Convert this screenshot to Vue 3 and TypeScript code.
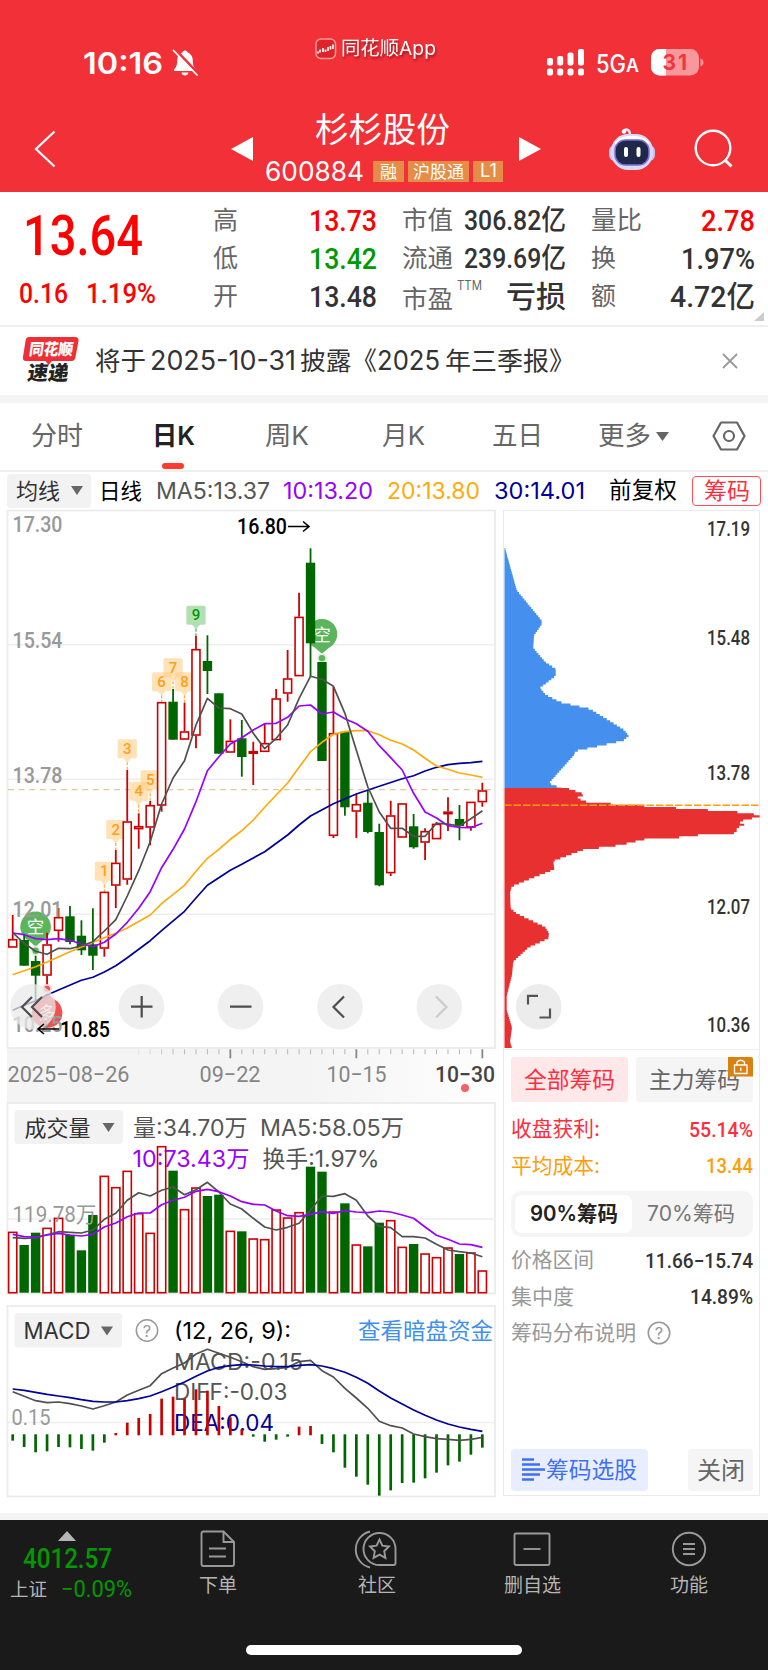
<script setup lang="ts">
import { h, type FunctionalComponent } from 'vue'

interface FitProps { t: string; w: number; s: number }

// One line of text set to a fixed measure.
const Fit: FunctionalComponent<FitProps> = (p) =>
  h('svg', { width: p.w, height: p.s }, [
    h('text', {
      x: 0, y: p.s * 0.86, 'font-size': p.s, textLength: p.w,
      lengthAdjust: 'spacingAndGlyphs', fill: 'currentColor',
    }, p.t),
  ])
Fit.props = ['t', 'w', 's']

const px = (i: number): number => 12.7 + 11.455 * i

// up, high, body top, body bottom, low
type Candle = [number, number, number, number, number]
const candles: Candle[] = [
  [1, 915, 939, 947.7, 947.7], [0, 935, 940, 965.7, 965.7], [0, 955.7, 961, 975.7, 1002], [1, 932.7, 944.3, 975.7, 984.3],
  [1, 908, 917, 931, 941.7], [0, 906, 916.3, 942, 944.3], [0, 920.3, 935.7, 950.3, 955], [0, 908.3, 944.3, 955.7, 970],
  [1, 891.7, 891.7, 948.7, 956.7], [1, 850, 862.7, 885.7, 908], [1, 770, 821.3, 879.7, 884.7], [1, 813.3, 826, 829.3, 848.7],
  [1, 801, 805, 827.7, 845.3], [1, 702, 702, 805.7, 811.7], [0, 689, 701.7, 739.7, 739.7], [1, 702.7, 731.3, 739.7, 739.7],
  [1, 636, 649, 735.7, 748.3], [0, 635.3, 661, 671, 694], [0, 693.3, 693.3, 753.7, 753.7], [1, 719.3, 740.7, 752.7, 752.7],
  [0, 720, 738.3, 757, 776.7], [1, 741.7, 751, 753.7, 785], [1, 723.7, 743, 752, 752], [1, 689, 698.3, 740.3, 740.3],
  [1, 650, 678.3, 693.7, 701.7], [1, 592.7, 616.7, 676.3, 676.3], [0, 548.3, 562.7, 643.3, 676.7], [0, 662, 662, 761, 761],
  [1, 686.7, 733, 836, 838], [0, 731.7, 731.7, 807.3, 815.7], [1, 794, 804, 811.7, 838], [0, 790, 802.7, 832, 833.3],
  [0, 823.7, 832, 885.3, 886.3], [1, 800.7, 815.3, 873.3, 876], [1, 803.3, 803.3, 837.7, 837.7], [0, 814, 826.3, 847.3, 848.7],
  [1, 828.3, 831, 842.7, 860], [1, 822, 823.7, 839.3, 839.3], [1, 797.3, 811.5, 814, 831], [0, 805, 819, 826, 840.3],
  [1, 801.7, 801.7, 827.7, 830.7], [1, 782.7, 790.3, 802.3, 806.7],
]

const line = (ys: number[], base = 0, k = 1): string =>
  ys.map((y, i) => `${px(i).toFixed(1)},${(base + y * k).toFixed(1)}`).join(' ')
const sparse = (ps: [number, number][]): string => ps.map(([i, y]) => `${px(i).toFixed(1)},${y}`).join(' ')

const ma5 = line([932.7, 943.3, 951.3, 954.3, 948.3, 948.7, 945.7, 941.7, 931, 919.7, 896, 870.7, 841.7, 804, 778, 760.7, 725, 698.3, 708, 708.7, 714, 733.3, 748.7, 738.3, 725, 698.3, 676.3, 679.3, 686.3, 713.3, 750, 787, 812, 828.3, 828.3, 836.3, 836.3, 823.3, 824, 826, 818.7, 810.7])
const ma10 = line([933, 934.7, 938.7, 939.7, 938.7, 940.3, 944, 946.7, 942.3, 934, 922.3, 908.3, 891.7, 867.7, 849.3, 829, 801.7, 770.7, 756.7, 744, 737.7, 730, 723.7, 723.3, 717.3, 706, 705, 714, 712, 718.7, 723.7, 731.3, 745.7, 757.7, 770, 793.3, 812, 818, 825.7, 827.3, 827.7, 823.3])
const ma20 = sparse([[0, 974.7], [2, 966.7], [3, 962], [5, 951.7], [7, 942.3], [9, 933.3], [10, 928], [12, 915], [13, 903.7], [15, 885.3], [16, 871.3], [17, 858.3], [18, 849.3], [19, 839.3], [20, 830.7], [21, 820], [22, 807.3], [23, 795], [24, 783], [25, 767.3], [26, 751.7], [27, 742.3], [28, 734.3], [29, 731.7], [30, 730.7], [31, 730.7], [32, 734.7], [33, 740.3], [34, 744], [35, 750], [36, 758.3], [37, 766], [38, 769.3], [39, 773], [40, 775], [41, 777.3]])
const ma30 = sparse([[0, 1010.3], [1, 1005.3], [2, 1000.7], [3, 995], [4, 990], [6, 980.3], [7, 977.3], [8, 972], [9, 965.7], [10, 957.7], [12, 940.7], [13, 930.7], [15, 911.3], [16, 898], [17, 885.3], [19, 870.3], [20, 864.3], [22, 851.7], [24, 835], [25, 825], [26, 816], [28, 803.7], [30, 794], [32, 786.3], [34, 778.7], [35, 775.7], [36, 771], [37, 767.3], [38, 764.7], [39, 763.3], [40, 762.7], [41, 761.3]])

const flags: [number, number, number][] = [
  [1, 8, 861.7], [2, 9, 820], [3, 10, 739.3], [4, 11, 781.7], [5, 12, 770.3], [6, 13, 672.3], [7, 14, 658.3], [8, 15, 672.3], [9, 16, 605.7],
]

const scaleMarks: [string, number][] = [['17.30', 532.3], ['15.54', 648], ['13.78', 782.7], ['12.01', 917], ['10.25', 1032.3]]
const ticks: number[] = Array.from({ length: 31 }, (_, k) => k + 11)
const majors = [19, 30, 41]

// bar tops; a minus sign marks a falling day
const volumes = [410, -450, -413, 398, 368, -420, -466, -360, 242, 276, 227, 354, 413, 153, -227, 342, 277, -303, -299, 407, -409, 430, 432, 343, 367, 351, -215, -230, 349, -325, 448, -454, -383, 375, 455, -447, 475, 486, 457, -477, 472, 526]
  .map((v) => ({ up: v > 0, y: 1095 + Math.abs(v) / 3 }))
const vol5 = line([428, 430, 429, 419, 410, 412, 414, 405, 373, 355, 316, 293, 303, 286, 276, 299, 284, 262, 291, 327, 342, 370, 396, 405, 397, 385, 345, 303, 304, 296, 316, 363, 394, 398, 425, 425, 429, 448, 465, 470, 474, 485], 1095, 1 / 3)
const vol10 = line([418, 425, 426, 420, 415, 420, 423, 418, 396, 384, 365, 354, 354, 329, 316, 307, 289, 283, 290, 303, 320, 328, 330, 348, 362, 364, 358, 350, 355, 347, 351, 353, 348, 351, 360, 370, 396, 421, 433, 447, 449, 457], 1095, 1 / 3)

const macdBars = [422, 441, 457, 454, 441, 442, 447, 452, 428, 399, 368, 354, 342, 296, 290, 297, 268, 272, 318, 352, 388, 410, 425, 419, 410, 380, 378, 432, 457, 503, 530, 554, 587, 571, 549, 548, 535, 518, 496, 485, 464, 443]
const diff = line([275, 289, 302, 308, 306, 311, 318, 327, 317, 306, 285, 271, 257, 221, 204, 189, 162, 148, 160, 172, 185, 200, 208, 206, 202, 185, 181, 212, 231, 265, 294, 325, 364, 377, 384, 402, 410, 416, 418, 421, 418, 412], 1300, 1 / 3)
const dea = line([267, 271, 277, 283, 288, 293, 299, 304, 306, 306, 302, 296, 288, 275, 261, 246, 229, 213, 202, 197, 194, 195, 198, 200, 200, 196, 194, 198, 206, 217, 232, 250, 273, 294, 312, 330, 346, 360, 372, 381, 388, 394], 1300, 1 / 3)

type Pt = [number, number]
const lossPts: Pt[] = [[505, 548], [516.7, 590.2], [541.7, 620.7], [541.7, 624.3], [534, 635.5], [533.3, 648], [545, 661.8], [555.7, 669], [555.7, 675.8], [540, 688], [546, 695], [560, 702], [590, 709], [615, 724.2], [624.3, 730.2], [628.7, 735.8], [623.3, 740.7], [575.3, 751.2], [574, 755], [549.3, 782.8], [552.7, 785.3], [562.7, 788]]
const gainPts: Pt[] = [[566, 788], [585, 794.4], [577.7, 797.5], [583.3, 801.4], [606.7, 803.5], [646.7, 806], [676.7, 808], [703, 809.8], [730, 811.2], [755, 814.4], [760, 816.5], [738.3, 821.7], [744.7, 825], [736.7, 827.7], [736.7, 833], [700, 835], [681.7, 837.2], [645, 839.3], [620, 845.2], [583.3, 849.8], [553.3, 861], [554.3, 869.4], [528.3, 879.6], [511.7, 886.6], [510, 892.6], [510.7, 908.4], [516.7, 913.6], [545, 927], [549, 933], [548.3, 938.5], [528.3, 947.6], [513.3, 961.7], [512, 975], [506.7, 996], [506.7, 1010], [512, 1027.6], [510, 1041.6], [512, 1048]]
function stepped(ps: Pt[]): string {
  const y0 = ps[0][1]
  const y1 = ps[ps.length - 1][1]
  let d = `M504.5 ${y0}`
  for (let y = y0; y < y1; y += 2.1) {
    const end = Math.min(y + 2.1, y1)
    const m = (y + end) / 2
    const k = Math.max(1, ps.findIndex((q) => q[1] > m))
    const [xa, ya] = ps[k - 1]
    const [xb, yb] = ps[k]
    const x = xa + ((xb - xa) * (m - ya)) / (yb - ya || 1)
    d += `H${x.toFixed(1)}V${end.toFixed(1)}`
  }
  return d + 'H504.5Z'
}
const lossPath = stepped(lossPts)
const gainPath = stepped(gainPts)
const chipMarks: [string, number][] = [['17.19', 535.5], ['15.48', 645], ['13.78', 779.6], ['12.07', 914], ['10.36', 1031.5]]
</script>

<template>
  <div class="app">
    <header class="top">
      <div class="status">
        <Fit class="ui w6 time" t="10:16" :w="80" :s="30" />
        <svg class="bell" width="28" height="28" viewBox="0 0 28 28">
          <path d="M14 1.500c1.600 0 2.400 1 2.500 2 3.800 1.200 5.300 4.500 5.300 8.500 0 5 1.500 6.500 3 8.300.6.9.2 1.700-.8 1.700H4c-1 0-1.400-.8-.8-1.700 1.500-1.800 3-3.300 3-8.300 0-4 1.500-7.300 5.300-8.500.1-1 .9-2 2.500-2zM10.500 23.500h7c-.4 1.800-1.700 3-3.500 3s-3.100-1.200-3.500-3z" fill="#fff" />
          <path d="M4.200 0.500 27.500 25" stroke="#f23038" stroke-width="2.600" />
          <path d="M2.500 1.500 26 26" stroke="#fff" stroke-width="1.800" stroke-linecap="round" />
        </svg>
        <div class="brand">
          <svg width="22" height="22" viewBox="0 0 22 22">
            <rect x="1" y="1" width="19.500" height="19.500" rx="5" fill="#e0222b" stroke="#f79a9e" stroke-width="1.500" />
            <path d="M3 15.500v-2m2 1v-3m3 2.500v-4m2.500 4v-2.500m2.500 1.500v-4m2.500 2.500v-3.500m2.500 3v-4.500" fill="none" stroke="#fff" stroke-width="1.700" />
          </svg>
          <Fit class="ui shadow" t="同花顺App" :w="95" :s="18.8" />
        </div>
        <svg class="signal" width="38" height="27" viewBox="0 0 38 27" fill="#fff">
          <rect x="0" y="9" width="6" height="7.500" rx="2" /><rect x="10.200" y="7" width="6" height="9.500" rx="2" /><rect x="20.500" y="3.500" width="6" height="13" rx="2" /><rect x="31" y="0" width="6" height="16.500" rx="2" />
          <rect x="0" y="19.500" width="6" height="7" rx="2" /><rect x="10.200" y="19.500" width="6" height="7" rx="2" /><rect x="20.500" y="19.500" width="6" height="7" rx="2" /><rect x="31" y="19.500" width="6" height="7" rx="2" />
        </svg>
        <Fit class="ui w5 g5" t="5G" :w="30" :s="25.5" />
        <Fit class="ui w6 ga" t="A" :w="13" :s="18" />
        <svg class="battery" width="53" height="27" viewBox="0 0 53 27">
          <defs><clipPath id="bat"><rect width="48" height="26.500" rx="8.500" /></clipPath></defs>
          <g clip-path="url(#bat)"><rect width="48" height="27" fill="#f9989c" /><rect width="15" height="27" fill="#fff" /></g>
          <path d="M49.500 9.500c2 .8 3 2.200 3 4s-1 3.200-3 4z" fill="#f9989c" />
          <text x="11.500" y="20.700" font-size="21" textLength="24.500" class="ui w7" fill="#ee3741">31</text>
        </svg>
      </div>
      <div class="titlebar">
        <svg class="back" width="22" height="38" viewBox="0 0 22 38"><path d="M20.500 1.500 2 19l18.500 17.500" fill="none" stroke="#fff" stroke-width="2.200" /></svg>
        <svg class="prev" width="22" height="24" viewBox="0 0 22 24"><path d="M22 0v24L0 12z" fill="#fff" /></svg>
        <div class="stock">
          <Fit class="ui" t="杉杉股份" :w="135" :s="34" />
          <div class="coderow">
            <Fit class="ui" t="600884" :w="99" :s="26.5" />
            <span class="tag t1"><Fit class="ui" t="融" :w="17" :s="17" /></span>
            <span class="tag t3"><Fit class="ui" t="沪股通" :w="51" :s="17" /></span>
            <span class="tag t2"><Fit class="ui" t="L1" :w="17" :s="18" /></span>
          </div>
        </div>
        <svg class="next" width="22" height="24" viewBox="0 0 22 24"><path d="M0 0v24l22-12z" fill="#fff" /></svg>
        <svg class="robot" width="48" height="44" viewBox="0 0 48 44">
          <path d="M15 5c2-4 7-3 7 3" fill="none" stroke="#e7e9fb" stroke-width="2.400" stroke-linecap="round" /><circle cx="16" cy="4.500" r="2.200" fill="#fff" />
          <rect x="1" y="18" width="46" height="16" rx="6" fill="#c3c7ee" />
          <rect x="3" y="7" width="42" height="36" rx="17" fill="#d6daf5" />
          <path d="M8 17C12 8 36 8 40 17" fill="none" stroke="#fff" stroke-width="3" />
          <rect x="7" y="13" width="34" height="25" rx="10.500" fill="#1f2849" stroke="#7d6de0" stroke-width="1.500" />
          <rect x="16" y="20" width="4" height="10" rx="2" fill="#fff" /><rect x="28.500" y="20" width="4" height="10" rx="2" fill="#fff" />
        </svg>
        <svg class="search" width="40" height="40" viewBox="0 0 40 40" fill="none" stroke="#fff" stroke-width="2.400"><circle cx="19" cy="19" r="17.300" /><path d="m31 31 6.500 6.500" stroke-width="3" /></svg>
      </div>
    </header>

    <section class="quote">
      <div class="last">
        <Fit class="din w5" t="13.64" :w="120" :s="55" />
        <div class="chg"><Fit class="din w5" t="0.16" :w="49" :s="28.500" /><Fit class="din w5" t="1.19%" :w="70" :s="28.500" /></div>
      </div>
      <div class="col c1">
        <div><Fit class="ui lab" t="高" :w="25" :s="25" /><Fit class="din w5 up" t="13.73" :w="68" :s="30" /></div>
        <div><Fit class="ui lab" t="低" :w="25" :s="25" /><Fit class="din w5 down" t="13.42" :w="68" :s="30" /></div>
        <div><Fit class="ui lab" t="开" :w="25" :s="25" /><Fit class="din w5" t="13.48" :w="68" :s="30" /></div>
      </div>
      <div class="col c2">
        <div><Fit class="ui lab" t="市值" :w="51" :s="25" /><Fit class="din w5" t="306.82亿" :w="102" :s="28" /></div>
        <div><Fit class="ui lab" t="流通" :w="51" :s="25" /><Fit class="din w5" t="239.69亿" :w="102" :s="28" /></div>
        <div><span class="pe"><Fit class="ui lab" t="市盈" :w="51" :s="25" /><Fit class="ui lab ttm" t="TTM" :w="25" :s="13" /></span><Fit class="ui w5" t="亏损" :w="60" :s="30" /></div>
      </div>
      <div class="col c3">
        <div><Fit class="ui lab" t="量比" :w="51" :s="25" /><Fit class="din w5 up" t="2.78" :w="54" :s="30" /></div>
        <div><Fit class="ui lab" t="换" :w="25" :s="25" /><Fit class="din w5" t="1.97%" :w="74" :s="30" /></div>
        <div><Fit class="ui lab" t="额" :w="25" :s="25" /><Fit class="din w5" t="4.72亿" :w="85" :s="30" /></div>
      </div>
      <svg class="corner" width="10" height="9"><path d="M10 0v9H0z" fill="#ccc" /></svg>
    </section>

    <section class="news">
      <svg class="nlogo" width="56" height="47" viewBox="0 0 56 47">
        <path d="M6 0h46q4 0 3.500 4l-3 16q-.6 4-4 4H29l-3.500 4-3-4H3q-3.500 0-3-4L2.500 4Q3 0 6 0z" fill="#ee2f35" />
        <text x="6" y="18.500" font-size="16" class="ui w9" textLength="44" lengthAdjust="spacingAndGlyphs" fill="#fff" transform="skewX(-8) translate(2 0)">同花顺</text>
        <text x="6" y="43.500" font-size="20" class="ui w9" textLength="41" lengthAdjust="spacingAndGlyphs" fill="#222" transform="skewX(-8) translate(4 0)">速递</text>
      </svg>
      <Fit class="ui" t="将于" :w="51" :s="25.500" />
      <Fit class="ui n1" t="2025-10-31" :w="146" :s="26.500" />
      <Fit class="ui n2" t="披露《" :w="77" :s="25.500" />
      <Fit class="ui" t="2025" :w="63" :s="26.500" />
      <Fit class="ui n3" t="年三季报》" :w="130" :s="25.500" />
      <svg class="x" width="16" height="16" viewBox="0 0 16 16"><path d="M1 1l14 14M15 1 1 15" stroke="#999" stroke-width="1.800" /></svg>
    </section>

    <nav class="tabs">
      <Fit class="ui a" t="分时" :w="52" :s="26" />
      <span class="on"><Fit class="ui w6" t="日K" :w="43" :s="26" /></span>
      <Fit class="ui b" t="周K" :w="44" :s="26" />
      <Fit class="ui c" t="月K" :w="43" :s="26" />
      <Fit class="ui d" t="五日" :w="51" :s="26" />
      <Fit class="ui e" t="更多" :w="53" :s="26" />
      <svg class="arr" width="13" height="9"><path d="M0 0h13L6.500 9z" fill="#666" /></svg>
      <svg class="gear" width="34" height="30" viewBox="0 0 34 30" fill="none" stroke="#666" stroke-width="2.200" stroke-linejoin="round"><path d="M9 1.500h16L32.500 15 25 28.500H9L1.500 15z" /><circle cx="17" cy="15" r="5" /></svg>
    </nav>

    <div class="mas">
      <span class="pick"><Fit class="ui" t="均线" :w="44" :s="22" /><svg width="12" height="9"><path d="M0 0h12L6 9z" fill="#666" /></svg></span>
      <Fit class="ui m0" t="日线" :w="43" :s="22" />
      <Fit class="ui m1" t="MA5:13.37" :w="114" :s="23" />
      <Fit class="ui m2" t="10:13.20" :w="90" :s="23" />
      <Fit class="ui m3" t="20:13.80" :w="93" :s="23" />
      <Fit class="ui m4" t="30:14.01" :w="91" :s="23" />
      <Fit class="ui m5" t="前复权" :w="68" :s="22.500" />
      <span class="chipbtn"><Fit class="ui" t="筹码" :w="46" :s="23" /></span>
    </div>

    <main class="board">
      <div class="left">
        <svg class="blk" width="500" height="540" viewBox="0 509 500 540">
          <rect x="7.500" y="510.500" width="487.500" height="537.500" fill="#fff" stroke="#ebebeb" stroke-width="1.800" />
          <path d="M8 644.700H495M8 779.300H495M8 914.300H495" stroke="#eee" stroke-width="1.500" />
          <path d="M8 789.700H495" stroke="#e2c7a0" stroke-width="1.300" stroke-dasharray="6 4.600" />
          <g v-for="i in [2, 27]" :key="'k' + i" :transform="`translate(${px(i)} ${i === 2 ? 927 : 634.300})`">
            <path d="M0 19.500 L-7 13.500 A15.300 15.300 0 1 1 7 13.500Z" fill="#5bb55b" />
            <circle cy="23.800" r="5" fill="#dff1df" /><circle cy="23.800" r="3.200" fill="#5bb55b" />
            <text y="6.300" font-size="17.500" text-anchor="middle" class="ui" fill="#fff">空</text>
          </g>
          <g :transform="`translate(${px(3)} 1012.700)`">
            <path d="M0 -20 L-7 -13.500 A15.300 15.300 0 1 0 7 -13.500Z" fill="#f05252" />
            <circle cy="-24" r="5" fill="#fbdcdc" /><circle cy="-24" r="3" fill="#f05252" />
            <text y="6" font-size="17" text-anchor="middle" class="ui" fill="#fff">多</text>
          </g>
          <g v-for="[n, i, y] in flags" :key="n" :transform="`translate(${px(i)} ${y})`">
            <path d="M-8 0H8q1.600 0 1.600 1.600V17.400q0 1.600-1.600 1.600H4L0 23.500-4 19H-8q-1.600 0-1.600-1.600V1.600Q-9.600 0-8 0z" :fill="n === 9 ? '#b2e0b2' : '#ffca7d'" :opacity="n === 9 ? 1 : 0.55" />
            <path d="M0 23v8" :stroke="n === 9 ? '#4cae4c' : '#ffab33'" stroke-width="1.200" stroke-dasharray="3 1.500" />
            <text y="14.700" font-size="15" text-anchor="middle" class="din w5" :fill="n === 9 ? '#090' : '#ff9f1a'">{{ n }}</text>
          </g>
          <g v-for="([up, hi, a, b, lo], i) in candles" :key="i">
            <path v-if="up" :d="`M${px(i)} ${hi}V${a}M${px(i)} ${b}V${lo}`" stroke="#c00" stroke-width="1.800" />
            <path v-else :d="`M${px(i)} ${hi}V${lo}`" stroke="#060" stroke-width="1.800" />
            <rect v-if="up" :x="px(i) - 4" :y="a + 0.7" width="8" :height="Math.max(1.500, b - a - 1.400)" fill="#fff" stroke="#c00" stroke-width="1.600" />
            <rect v-else :x="px(i) - 4.700" :y="a" width="9.400" :height="b - a" fill="#060" />
          </g>
          <g fill="none" stroke-width="1.700" stroke-linejoin="round">
            <polyline :points="ma30" stroke="#009" /><polyline :points="ma20" stroke="#ffab0a" />
            <polyline :points="ma10" stroke="#90f" /><polyline :points="ma5" stroke="#505050" />
          </g>
          <text v-for="[t, y] in scaleMarks" :key="t" class="din w5" x="12.500" :y="y" font-size="21.500" textLength="50" lengthAdjust="spacingAndGlyphs" fill="#999">{{ t }}</text>
          <text x="237" y="534" class="din w5" font-size="21.500" textLength="50" lengthAdjust="spacingAndGlyphs">16.80</text>
          <path d="M288 526.500h21m-6-5 6 5-6 5" fill="none" stroke="#000" stroke-width="1.600" />
          <g fill="#e9e9e9" fill-opacity=".75">
            <circle v-for="c in [33, 141.500, 240.500, 340, 439.300]" :key="c" :cx="c" cy="1006.700" r="22.800" />
          </g>
          <g fill="none" stroke="#4d4d4d" stroke-width="2.200">
            <path d="M32 997 22 1007 32 1017M42 997 32 1007 42 1017M131 1006.700h21.500M141.700 996v21.500M230 1006.700h21.500M344 996.500 333.500 1007 344 1017.500" />
            <path d="M436 996.500 446.500 1007 436 1017.500" stroke="#ccc" />
          </g>
          <text x="60" y="1036.500" class="din w5" font-size="21.500" textLength="50" lengthAdjust="spacingAndGlyphs">10.85</text>
          <path d="M59 1029H38m6-5-6 5 6 5" fill="none" stroke="#000" stroke-width="1.600" />
        </svg>

        <svg class="blk" width="500" height="53" viewBox="0 1049 500 53">
          <defs><linearGradient id="ax"><stop offset="0" stop-color="#f4f4f4" /><stop offset=".6" stop-color="#f4f4f4" /><stop offset="1" stop-color="#fefefe" /></linearGradient></defs>
          <rect x="7" y="1049" width="489" height="53" fill="url(#ax)" />
          <path v-for="i in ticks" :key="i" :d="`M${px(i)} 1049.300v${majors.includes(i) ? 9 : 5}`" :stroke="majors.includes(i) ? '#888' : '#bbb'" :stroke-width="majors.includes(i) ? 1.800 : 1.100" :opacity="Math.min(1, (i - 10) / 4)" />
          <g class="din w4" font-size="22.500" fill="#858585">
            <text x="7.500" y="1082" textLength="122" lengthAdjust="spacingAndGlyphs">2025−08−26</text>
            <text x="199.500" y="1082" textLength="61" lengthAdjust="spacingAndGlyphs">09−22</text>
            <text x="326.500" y="1082" textLength="60" lengthAdjust="spacingAndGlyphs">10−15</text>
            <text x="435" y="1082" class="w5" fill="#444" textLength="60" lengthAdjust="spacingAndGlyphs">10−30</text>
          </g>
          <circle cx="465" cy="1088" r="4" fill="#f56060" />
        </svg>

        <svg class="blk" width="500" height="193" viewBox="0 1102 500 193">
          <rect x="7.500" y="1103" width="487.500" height="190.500" fill="#fff" stroke="#ebebeb" stroke-width="1.800" />
          <path d="M8 1219H495" stroke="#eee" stroke-width="1.500" />
          <rect x="14.500" y="1110" width="108.500" height="34" rx="4" fill="#f2f2f2" />
          <text x="24.500" y="1135.500" class="ui" font-size="22" textLength="66" fill="#333">成交量</text>
          <path d="M102.500 1123h12l-6 9z" fill="#666" />
          <g class="ui" font-size="22.500" fill="#555">
            <text x="133" y="1135.700" textLength="114.500" lengthAdjust="spacingAndGlyphs">量:34.70万</text>
            <text x="260" y="1135.700" textLength="144" lengthAdjust="spacingAndGlyphs">MA5:58.05万</text>
            <text x="132.500" y="1166.500" fill="#90f" textLength="117" lengthAdjust="spacingAndGlyphs">10:73.43万</text>
            <text x="262.500" y="1166.500" textLength="117" lengthAdjust="spacingAndGlyphs">换手:1.97%</text>
          </g>
          <template v-for="(v, i) in volumes" :key="i">
            <rect v-if="v.up" :x="px(i) - 4.100" :y="v.y + 0.700" width="8.200" :height="1292 - v.y" fill="none" stroke="#c00" stroke-width="1.600" />
            <rect v-else :x="px(i) - 4.700" :y="v.y" width="9.400" :height="1292.700 - v.y" fill="#060" />
          </template>
          <text x="12.500" y="1222.300" class="din w4" font-size="21.500" textLength="84" lengthAdjust="spacingAndGlyphs" fill="#999">119.78万</text>
          <g fill="none" stroke-width="1.700" stroke-linejoin="round"><polyline :points="vol5" stroke="#505050" /><polyline :points="vol10" stroke="#90f" /></g>
        </svg>

        <svg class="blk macd" width="500" height="193" viewBox="0 1305 500 193">
          <rect x="7.500" y="1306" width="487.500" height="190.500" fill="#fff" stroke="#ebebeb" stroke-width="1.800" />
          <path d="M8 1422.500H495" stroke="#eee" stroke-width="1.500" />
          <rect x="14.500" y="1313" width="107.500" height="34.500" rx="4" fill="#f2f2f2" />
          <path d="M101 1326.500h12l-6 9z" fill="#666" />
          <circle cx="147" cy="1330.500" r="10.700" fill="none" stroke="#999" stroke-width="1.500" />
          <text x="147" y="1336.500" text-anchor="middle" class="ui" font-size="16.500" fill="#999">?</text>
          <g class="ui" font-size="22.500" fill="#555">
            <text x="23.500" y="1339" fill="#333" textLength="67" lengthAdjust="spacingAndGlyphs">MACD</text>
            <text x="174" y="1339" fill="#000" textLength="117" lengthAdjust="spacingAndGlyphs">(12, 26, 9):</text>
            <text x="174" y="1370" textLength="129" lengthAdjust="spacingAndGlyphs">MACD:-0.15</text>
            <text x="174" y="1400" textLength="113.500" lengthAdjust="spacingAndGlyphs">DIFF:-0.03</text>
            <text x="174" y="1431" fill="#009" textLength="100" lengthAdjust="spacingAndGlyphs">DEA:0.04</text>
            <text x="358" y="1338.700" fill="#4090f0" textLength="135">查看暗盘资金</text>
          </g>
          <text x="11.500" y="1425" class="din w4" font-size="21.500" textLength="39" lengthAdjust="spacingAndGlyphs" fill="#999">0.15</text>
          <path v-for="(z, i) in macdBars" :key="i" :d="`M${px(i)} ${z < 403 ? 1435.300 : 1434.300}V${1300 + z / 3}`" :stroke="z < 403 ? '#c00' : '#060'" stroke-width="2.700" />
          <g fill="none" stroke-width="1.700" stroke-linejoin="round"><polyline :points="diff" stroke="#505050" /><polyline :points="dea" stroke="#009" /></g>
        </svg>
      </div>

      <aside class="right">
        <svg class="blk" width="257" height="539" viewBox="504 510 257 539">
          <path :d="lossPath" fill="#4590ef" /><path :d="gainPath" fill="#e83030" />
          <path d="M504 805.200H759.500" stroke="#ff9d0a" stroke-width="1.600" stroke-dasharray="7.500 2" />
          <text v-for="[t, y] in chipMarks" :key="t" x="707" :y="y" class="din w5" font-size="19.500" textLength="43" lengthAdjust="spacingAndGlyphs" fill="#333">{{ t }}</text>
          <circle cx="538.700" cy="1006.700" r="22.800" fill="#e9e9e9" fill-opacity=".85" />
          <path d="M528 1004.500v-8.700h10M550 1008.500v9h-10.500" fill="none" stroke="#555" stroke-width="2.200" />
        </svg>
        <div class="chips">
          <div class="row2">
            <span class="all"><Fit class="ui" t="全部筹码" :w="91" :s="22.700" /></span>
            <span class="main"><Fit class="ui" t="主力筹码" :w="91" :s="22.700" />
              <svg class="lock" width="25" height="19.500" viewBox="0 0 25 19.500"><path d="M0 0h23q2 0 2 2v17.500H0z" fill="#d9820f" /><path d="M6.500 8h12.500v8.500H6.500zM9 8V5q3.700-3.500 7.500 0v3M12.800 10.500v3.500" fill="none" stroke="#fff" stroke-width="1.300" /></svg>
            </span>
          </div>
          <div class="kv red"><Fit class="ui" t="收盘获利:" :w="89" :s="21" /><Fit class="din w5" t="55.14%" :w="64" :s="20.500" /></div>
          <div class="kv org"><Fit class="ui" t="平均成本:" :w="89" :s="21" /><Fit class="din w5" t="13.44" :w="47" :s="20.500" /></div>
          <div class="seg"><span class="sel"><Fit class="ui w6" t="90%筹码" :w="88" :s="21" /></span><span><Fit class="ui" t="70%筹码" :w="88" :s="21" /></span></div>
          <div class="kv gry"><Fit class="ui" t="价格区间" :w="83" :s="21" /><Fit class="din w5 dk" t="11.66−15.74" :w="108" :s="20.500" /></div>
          <div class="kv gry"><Fit class="ui" t="集中度" :w="63" :s="21" /><Fit class="din w5 dk" t="14.89%" :w="63" :s="20.500" /></div>
          <div class="kv gry help"><Fit class="ui" t="筹码分布说明" :w="125" :s="21" />
            <svg width="24" height="24" viewBox="0 0 24 24"><circle cx="12" cy="12" r="10.700" fill="none" stroke="#999" stroke-width="1.600" /><text x="12" y="18" text-anchor="middle" class="ui" font-size="16.500" fill="#999">?</text></svg>
          </div>
          <div class="acts">
            <span class="sift"><svg width="23" height="23" viewBox="0 0 23 23" stroke="#3f6ff5" stroke-width="2.600"><path d="M0 1.500h12M0 6.500h18M0 11.500h23M0 16.500h18M0 21.500h12" /></svg><Fit class="ui" t="筹码选股" :w="91" :s="22.700" /></span>
            <span class="close"><Fit class="ui" t="关闭" :w="48" :s="24" /></span>
          </div>
        </div>
      </aside>
    </main>

    <footer class="foot">
      <div class="index">
        <svg width="18" height="10"><path d="M0 10h18L9 0z" fill="#b5b5b5" /></svg>
        <Fit class="din w5 green i1" t="4012.57" :w="89" :s="27" />
        <div class="i2"><Fit class="ui" t="上证" :w="37" :s="18.500" /><Fit class="din w4 green" t="−0.09%" :w="71" :s="23.500" /></div>
      </div>
      <div class="item f1">
        <svg width="36" height="38" viewBox="0 0 36 38" fill="none" stroke="#999" stroke-width="1.900"><path d="M3 1.500h20.500L34 12v22q0 2-2 2H3.500q-2 0-2-2V3.500q0-2 2-2z" /><path d="M23.500 1.500V12H34M9 18.500h17M9 26.500h17" /></svg>
        <Fit class="ui" t="下单" :w="38" :s="19" />
      </div>
      <div class="item f2">
        <svg width="40" height="38" viewBox="0 0 40 38" fill="none" stroke="#999" stroke-width="1.900"><path d="M38.500 19V33q0 2-2 2H22.500A16 16 0 1 1 38.500 19z" /><path d="M13 1.500a18.500 18.500 0 0 0 0 36" /><path d="m22.500 9.500 2.900 6.100 6.600.9-4.800 4.700 1.200 6.700-5.900-3.200-5.900 3.200 1.200-6.700-4.800-4.700 6.600-.9z" /></svg>
        <Fit class="ui" t="社区" :w="38" :s="19" />
      </div>
      <div class="item f3">
        <svg width="38" height="38" viewBox="0 0 38 38" fill="none" stroke="#999" stroke-width="1.900"><rect x="1.500" y="3.500" width="35" height="31.500" rx="1.500" /><path d="M10.500 19h17" /></svg>
        <Fit class="ui" t="删自选" :w="57" :s="19" />
      </div>
      <div class="item f4">
        <svg width="38" height="38" viewBox="0 0 38 38" fill="none" stroke="#999" stroke-width="1.900"><circle cx="19" cy="19" r="16.200" /><path d="M13 14h12M13 19h12M13 24h12" /></svg>
        <Fit class="ui" t="功能" :w="38" :s="19" />
      </div>
      <div class="home"></div>
    </footer>
  </div>
</template>

<style>
body { background: #fff; }
</style>

<style scoped>
.app { width: 768px; height: 1670px; overflow: hidden; background: #fff; color: #333; }
svg { display: block; flex: none; overflow: visible; }
.ui { font-family: Inter, "Noto Sans CJK SC", sans-serif; font-weight: 400; }
.din { font-family: Roboto, "Noto Sans CJK SC", sans-serif; font-weight: 400; }
.w4 { font-weight: 400; }
.w5 { font-weight: 500; }
.w6 { font-weight: 600; }
.w7 { font-weight: 700; }
.w9 { font-weight: 900; }

.top { height: 191.5px; background: #f23038; color: #fff; }
.status { box-sizing: border-box; height: 106px; padding: 19px 0 0 83px; display: flex; align-items: center; }
.bell { margin-left: 8px; }
.brand { display: flex; align-items: center; gap: 4px; width: 121px; margin: 0 0 28px 116px; }
.shadow { filter: drop-shadow(1px 2px 1px rgba(90, 0, 0, .55)); }
.signal { margin-left: 111px; }
.g5 { margin: 2px 0 0 11px; }
.ga { margin: 7px 0 0 0; }
.battery { margin-left: 12px; }
.titlebar { height: 85px; display: flex; align-items: center; }
.back { margin-left: 34px; }
.prev { margin-left: 175px; }
.stock { width: 240px; margin-left: 11px; display: flex; flex-direction: column; align-items: center; gap: 13px; }
.stock > svg { margin: -2px 0 0 -3px; }
.coderow { display: flex; align-items: center; gap: 4px; height: 22px; }
.coderow > svg { margin-right: 5px; }
.tag { height: 21px; background: #e58c46; display: flex; align-items: center; justify-content: center; }
.t1 { width: 31px; }
.t3 { width: 61px; }
.t2 { width: 30px; }
.next { margin-left: 15px; }
.robot { margin-left: 67px; }
.search { margin-left: 38px; }

.quote { position: relative; box-sizing: border-box; height: 135px; display: flex; border-bottom: 2px solid #efefef; }
.last { margin-left: 23px; width: 190px; color: #f00; }
.last > svg { margin-top: 16px; }
.chg { display: flex; gap: 18px; margin: 15px 0 0 -4px; }
.col { display: flex; flex-direction: column; padding-top: 9px; }
.col > div { height: 38.200px; display: flex; align-items: center; justify-content: space-between; }
.c1 { width: 164px; }
.c2 { width: 164px; margin-left: 25px; }
.c3 { width: 164px; margin-left: 25px; }
.pe { display: flex; align-items: center; padding-top: 5px; }
.ttm { margin: -26px 0 0 4px; }
.lab { color: #666; }
.up { color: #f00; }
.down { color: #090; }
.corner { position: absolute; right: 4px; bottom: 4px; }

.news { height: 68px; padding-left: 23px; display: flex; align-items: center; border-bottom: 8px solid #f4f4f4; }
.nlogo { margin: 0 16px 0 0; }
.n1 { margin-left: 4px; }
.n2 { margin-left: 4px; }
.n3 { margin-left: 5px; }
.x { margin-left: 147px; }

.tabs { box-sizing: border-box; height: 69px; display: flex; align-items: center; color: #666; border-bottom: 2px solid #efefef; }
.a { margin-left: 31px; }
.on { position: relative; margin-left: 69px; color: #222; }
.on::after { content: ""; position: absolute; left: 10px; top: 40px; width: 22px; height: 6px; border-radius: 3px; background: #ff3b30; }
.b { margin-left: 70px; }
.c { margin-left: 73px; }
.d { margin-left: 67px; }
.e { margin-left: 55px; }
.arr { margin-left: 5px; }
.gear { margin-left: 43px; }

.mas { height: 38px; padding-left: 7px; display: flex; align-items: center; color: #000; }
.pick { box-sizing: border-box; width: 84px; height: 34px; padding-left: 9px; border-radius: 4px; background: #f2f2f2; color: #333; display: flex; align-items: center; gap: 11px; }
.m0 { margin-left: 8px; }
.m1 { margin-left: 14px; color: #555; }
.m2 { margin-left: 13px; color: #90f; }
.m3 { margin-left: 14px; color: #ffab0a; }
.m4 { margin-left: 14px; color: #009; }
.m5 { margin-left: 24px; }
.chipbtn { box-sizing: border-box; width: 69px; height: 30px; margin-left: 15px; border: 1.500px solid #ff4d5a; border-radius: 4px; color: #ff2d3d; display: flex; align-items: center; justify-content: center; }

.board { display: flex; height: 1003.500px; }
.left { width: 500px; margin-top: -1px; }
.macd { margin-top: 10px; }
.right { box-sizing: border-box; width: 257px; height: 986px; margin-left: 3px; border: 1.500px solid #ebebeb; }
.right > svg { margin: -1px 0 0 0; }
.chips { box-sizing: border-box; height: 446px; border-top: 1px solid #eee; padding: 7px 6px 4px 7px; display: flex; flex-direction: column; }
.row2 { display: flex; justify-content: space-between; }
.row2 span { height: 45px; display: flex; align-items: center; justify-content: center; border-radius: 3px; width: 117px; }
.all { background: #ffe8ea; color: #ff2d3d; }
.main { position: relative; background: #f5f5f5; color: #666; }
.lock { position: absolute; right: 0; top: 0; }
.kv { height: 36.500px; display: flex; align-items: center; justify-content: space-between; }
.red { color: #ff2d3d; margin-top: 9px; }
.org { color: #ff9d0a; }
.gry { color: #999; }
.dk { color: #333; }
.help { justify-content: flex-start; gap: 11px; }
.seg { box-sizing: border-box; height: 46px; margin: 7px 0 5px; padding: 4px; border-radius: 10px; background: #f5f5f5; display: flex; color: #777; }
.seg span { flex: 1; display: flex; align-items: center; justify-content: center; border-radius: 7px; }
.seg .sel { background: #fff; color: #222; }
.acts { margin-top: auto; display: flex; justify-content: space-between; height: 42px; }
.acts span { display: flex; align-items: center; justify-content: center; border-radius: 4px; }
.sift { width: 137px; background: #e8eeff; color: #3f6ff5; gap: 1px; }
.close { width: 65px; background: #f5f5f5; color: #666; }

.foot { position: relative; height: 150px; border-top: 7px solid #f4f4f4; background: #1a1a1a; color: #b5b5b5; display: flex; }
.index { width: 134px; padding-top: 11px; display: flex; flex-direction: column; align-items: center; }
.i1 { margin-top: 4px; }
.i2 { margin: 5px 0 0 7px; display: flex; align-items: center; gap: 14px; }
.green { color: #090; }
.item { display: flex; flex-direction: column; align-items: center; gap: 8px; padding-top: 10px; width: 60px; }
.f1 { margin-left: 54px; }
.f2 { margin-left: 99px; }
.f3 { margin-left: 95px; }
.f4 { margin-left: 97px; }
.home { position: absolute; left: 246px; top: 125px; width: 276px; height: 10px; border-radius: 5px; background: #fff; }
</style>
